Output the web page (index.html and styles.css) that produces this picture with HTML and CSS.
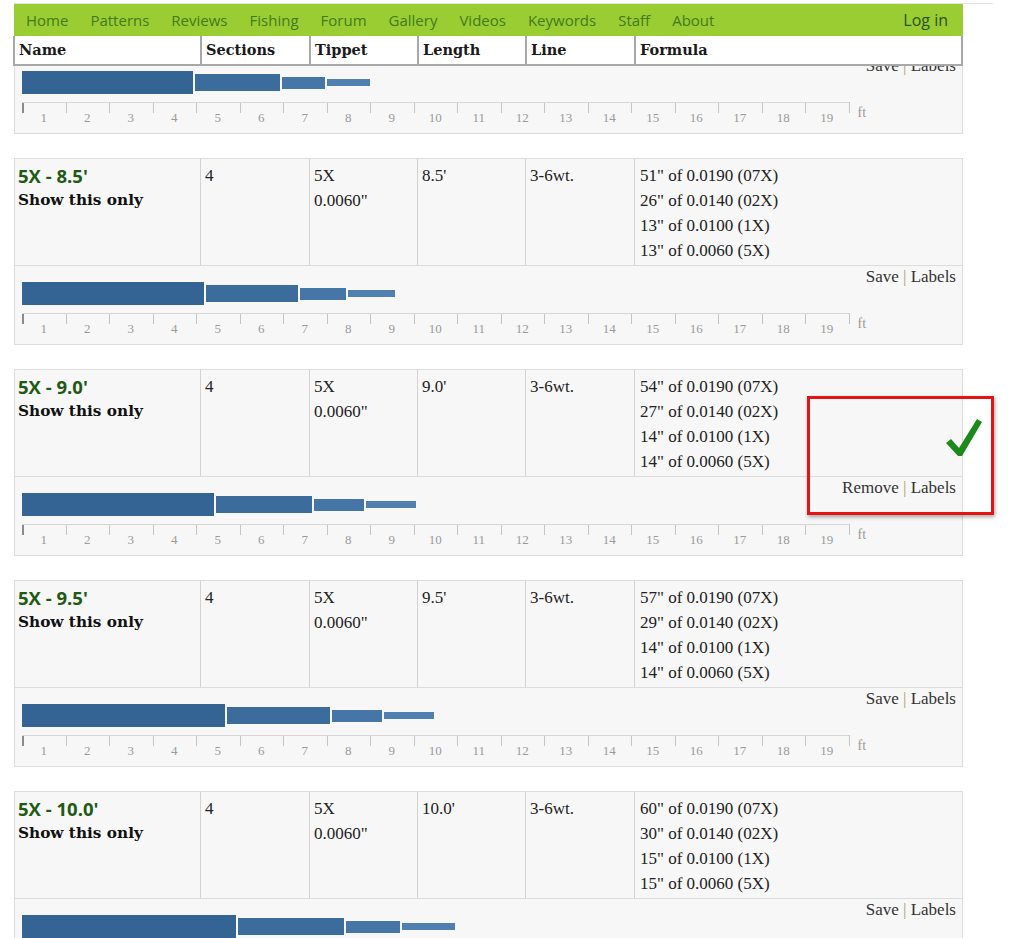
FILE: index.html
```html
<!DOCTYPE html>
<html lang="en">
<head>
    <meta charset="UTF-8">
    <title>Leader formulas</title>
    <link rel="stylesheet" href="styles.css">
</head>
<body>
    <!-- Menu and column titles stay on top -->
    <div id="top">
        <div id="top-inner">
            <div id="nav">
                <a href="#">Home</a>
                <a href="#">Patterns</a>
                <a href="#">Reviews</a>
                <a href="#">Fishing</a>
                <a href="#">Forum</a>
                <a href="#">Gallery</a>
                <a href="#">Videos</a>
                <a href="#">Keywords</a>
                <a href="#">Staff</a>
                <a href="#">About</a>
                <a href="#" class="login">Log in</a>
            </div>
            <div id="head" class="cols">
                <div>Name</div>
                <div>Sections</div>
                <div>Tippet</div>
                <div>Length</div>
                <div>Line</div>
                <div>Formula</div>
            </div>
        </div>
    </div>

    <div id="list"></div>

    <script>
        const pxPerInch = 3.56;
        const diameters = ['0.0190 (07X)', '0.0140 (02X)', '0.0100 (1X)', '0.0060 (5X)'];
        const leaders = [
            { len: '8.0', parts: [48, 24, 12, 12] },
            { len: '8.5', parts: [51, 26, 13, 13] },
            { len: '9.0', parts: [54, 27, 14, 14], saved: true },
            { len: '9.5', parts: [57, 29, 14, 14] },
            { len: '10.0', parts: [60, 30, 15, 15] }
        ];

        const list = document.getElementById('list');

        function ruler() {
            let html = '<div class="ruler">';
            for (let i = 1; i <= 19; i++) {
                html += `<div class="seg${i === 1 ? ' first' : ''}"><span>${i}</span></div>`;
            }
            return html + '<div class="end"><span>ft</span></div></div>';
        }

        leaders.forEach(l => {
            const formula = l.parts.map((p, i) => `${p}" of ${diameters[i]}`).join('<br>');
            const bars = l.parts.map((p, i) =>
                `<div class="bar b${i + 1}" style="width:${(p * pxPerInch).toFixed(1)}px"></div>`).join('');
            const links = l.saved ? 'Remove' : 'Save';
            const mark = l.saved ? `
                <div class="mark">
                    <svg width="36" height="38" viewBox="0 0 36 38">
                        <path d="M0 24 L5 20 L13 29 L31 0 L36 3 L16 37 L12 37 Z" fill="#1b8a1b"/>
                    </svg>
                </div>` : '';

            const card = document.createElement('div');
            card.className = 'card';
            card.innerHTML = `
                <div class="row cols">
                    <div class="cell"><div class="title">5X - ${l.len}'</div><div class="only">Show this only</div></div>
                    <div class="cell">4</div>
                    <div class="cell">5X<br>0.0060"</div>
                    <div class="cell">${l.len}'</div>
                    <div class="cell">3-6wt.</div>
                    <div class="cell">${formula}</div>
                </div>
                <div class="chart">
                    <div class="links"><a href="#">${links}</a> <span class="sep">|</span> <a href="#">Labels</a></div>
                    <div class="bars">${bars}</div>
                    ${ruler()}
                </div>
                ${mark}`;
            list.appendChild(card);
        });
    </script>
</body>
</html>
```

FILE: styles.css
```css
/* General */
html {
    overflow: hidden;
}

body {
    margin: 0;
    font-family: "Liberation Serif", serif;
    color: #222;
    background: #fff;
}

a {
    color: inherit;
    text-decoration: none;
}

/* Fixed top: menu + column titles */
#top {
    position: fixed;
    top: 0;
    left: 0;
    right: 0;
    padding-top: 3px;
    background: #fff;
    z-index: 5;
}

#top-inner {
    margin-left: 14px;
    width: 979px;
    border-top: 1px solid #e4e4e4;
}

#nav {
    width: 949px;
    height: 32px;
    box-sizing: border-box;
    padding: 0 15px 0 12px;
    display: flex;
    background: #9acd32;
    font-family: "Open Sans", sans-serif;
    font-size: 15px;
    line-height: 32px;
}

    #nav a {
        color: #437a1c;
        margin-right: 22px;
    }

    #nav .login {
        margin-left: auto;
        margin-right: 0;
        font-size: 16px;
        color: #2c5212;
    }

.cols {
    display: grid;
    grid-template-columns: 186px 109px 108px 108px 109px 1fr;
}

#head {
    width: 950px;
    margin-left: -1px;
    box-sizing: border-box;
    background: #fff;
    border: 2px solid #a8a8a8;
    border-top: 0;
    grid-template-columns: 187px 109px 108px 108px 109px 1fr;
    font-family: "DejaVu Serif", serif;
    font-weight: bold;
    font-size: 14.5px;
    line-height: 28px;
    color: #1a1a1a;
}

    #head div {
        padding-left: 4px;
        border-right: 2px solid #a8a8a8;
    }

        #head div:last-child {
            border-right: 0;
        }

/* Leader cards */
#list {
    margin-top: -53px;
    padding-left: 14px;
}

.card {
    position: relative;
    width: 949px;
    box-sizing: border-box;
    margin-bottom: 24px;
    background: #f7f7f7;
    border: 1px solid #dcdcdc;
}

.row {
    border-bottom: 1px solid #dcdcdc;
    font-size: 17px;
    line-height: 25px;
    color: #222;
}

.cell {
    padding: 4px 4px 2px 4px;
    border-right: 1px solid #d2d2d2;
}

    .cell:first-child {
        padding-left: 3px;
    }

    .cell:last-child {
        border-right: 0;
        padding-left: 5px;
    }

.title {
    font-family: "Open Sans", sans-serif;
    font-weight: bold;
    font-size: 18.5px;
    color: #1f5a14;
}

.only {
    font-family: "DejaVu Serif", serif;
    font-weight: bold;
    font-size: 15.3px;
    color: #111;
}

/* Bars and ruler */
.chart {
    height: 78px;
    box-sizing: border-box;
    padding: 0 6px 0 7px;
}

.links {
    text-align: right;
    font-size: 17px;
    line-height: 21px;
    margin-bottom: -5px;
    color: #333;
}

    .links .sep {
        color: #aaa25e;
    }

.bars {
    display: flex;
    align-items: center;
    height: 23px;
}

.bar {
    flex: none;
    margin-right: 2px;
}

.b1 {
    height: 23px;
    background: #336494;
}

.b2 {
    height: 17px;
    background: #3c6c9c;
}

.b3 {
    height: 12px;
    background: #4676a7;
}

.b4 {
    height: 7px;
    background: #4f80b1;
}

.ruler {
    display: flex;
    margin-top: 8px;
    height: 20px;
}

.seg {
    flex: none;
    width: 43.5px;
    box-sizing: border-box;
    border-top: 1px solid #d6d6d6;
    background: linear-gradient(#c4c4c4, #c4c4c4) no-repeat 0 0 / 1px 10px;
    text-align: center;
}

    .seg.first {
        background: linear-gradient(#8a8a8a, #8a8a8a) no-repeat 0 0 / 2px 10px;
    }

    .seg span {
        display: block;
        padding-top: 8px;
        font-size: 13px;
        line-height: 13px;
        color: #9a9a9a;
    }

.end {
    width: 30px;
    background: linear-gradient(#c4c4c4, #c4c4c4) no-repeat 0 0 / 1px 11px;
}

    .end span {
        display: block;
        padding: 4px 0 0 9px;
        font-size: 14px;
        line-height: 14px;
        color: #999;
    }

/* Saved-state annotation */
.mark {
    position: absolute;
    left: 792px;
    top: 26px;
    width: 187px;
    height: 119px;
    box-sizing: border-box;
    border: 3px solid #e41414;
    box-shadow: 1px 2px 4px rgba(0, 0, 0, 0.35);
    display: flex;
    justify-content: flex-end;
    padding: 20px 9px 0 0;
}
```
